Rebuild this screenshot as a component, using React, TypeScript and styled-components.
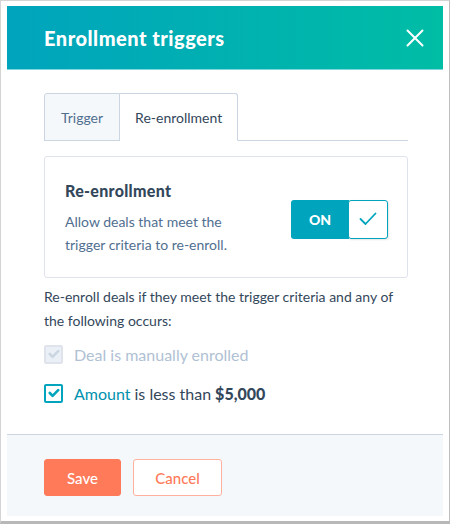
import React from "react";
import styled, { createGlobalStyle } from "styled-components";

const Global = createGlobalStyle`
  html, body { margin: 0; padding: 0; background: #fff; }
  body { font-family: Lato, "Open Sans", sans-serif; color: #33475b; }
  * { box-sizing: border-box; }
`;

const Frame = styled.div`
  width: 450px;
  height: 524px;
  border: 1px solid #d4d4d4;
  border-right-color: #bdbdbd;
  border-bottom: 3px solid #b8b8b8;
  padding: 5px 5px 4px 6px;
  background: #fff;
`;

const Dialog = styled.div`
  width: 436px;
  height: 510px;
  display: flex;
  flex-direction: column;
  background: #fff;
`;

const Header = styled.div`
  height: 64px;
  flex: none;
  display: flex;
  align-items: center;
  justify-content: space-between;
  padding: 0 19px 0 37px;
  background: linear-gradient(90deg, #00a4bd 0%, #00bda5 100%);
  border-bottom: 1px solid #7fd6dd;
`;

const Title = styled.h1`
  margin: 0;
  font-family: Lato, sans-serif;
  font-weight: 900;
  font-size: 20px;
  color: #fff;
  letter-spacing: 0.5px;
`;

const Close = styled.button`
  border: 0;
  background: none;
  padding: 0;
  width: 18px;
  height: 18px;
  display: flex;
  cursor: pointer;
`;

const Body = styled.div`
  flex: 1;
  padding: 23px 35px 0 37px;
`;

const Tabs = styled.div`
  display: flex;
  border-bottom: 1px solid #cbd6e2;
  height: 48px;
`;

const Tab = styled.div<{ $active?: boolean }>`
  height: 48px;
  display: flex;
  align-items: center;
  padding: 0 ${(p) => (p.$active ? "15px" : "16px")};
  font-size: 14px;
  color: ${(p) => (p.$active ? "#33475b" : "#516f90")};
  background: ${(p) => (p.$active ? "#fff" : "#f5f8fa")};
  border: 1px solid #cbd6e2;
  border-bottom: ${(p) => (p.$active ? "1px solid #fff" : "1px solid #cbd6e2")};
  border-left: ${(p) => (p.$active ? "0" : "1px solid #cbd6e2")};
  border-radius: ${(p) => (p.$active ? "0 3px 0 0" : "3px 0 0 0")};
`;

const Card = styled.div`
  margin-top: 15px;
  height: 122px;
  border: 1px solid #dfe3eb;
  border-radius: 3px;
  display: flex;
  align-items: center;
  justify-content: space-between;
  padding: 0 19px 0 20px;
`;

const CardText = styled.div`
  display: flex;
  flex-direction: column;
`;

const CardTitle = styled.div`
  font-weight: 900;
  font-size: 16px;
  letter-spacing: 0.3px;
  color: #33475b;
  margin-bottom: 10px;
  margin-top: 2px;
`;

const CardDesc = styled.div`
  font-size: 14px;
  line-height: 23px;
  color: #516f90;
  width: 175px;
`;

const Toggle = styled.div`
  display: flex;
  height: 39px;
  margin-top: 4px;
`;

const ToggleOn = styled.div`
  width: 58px;
  background: #00a4bd;
  color: #fff;
  font-weight: 900;
  font-size: 14px;
  display: flex;
  align-items: center;
  justify-content: center;
  border-radius: 3px 0 0 3px;
`;

const ToggleKnob = styled.div`
  width: 40px;
  background: #fff;
  border: 1px solid #00a4bd;
  border-radius: 3px;
  margin-left: -1px;
  display: flex;
  align-items: center;
  justify-content: center;
  box-shadow: 1px 1px 2px rgba(0, 0, 0, 0.1);
`;

const Intro = styled.p`
  margin: 7px 0 0;
  font-size: 14px;
  line-height: 24px;
  color: #33475b;
`;

const Options = styled.div`
  margin-top: 11px;
  display: flex;
  flex-direction: column;
  gap: 19px;
`;

const Option = styled.label<{ $disabled?: boolean }>`
  display: flex;
  align-items: center;
  gap: 11px;
  height: 20px;
  font-size: 16px;
  color: ${(p) => (p.$disabled ? "#b0c1d4" : "#33475b")};
`;

const Box = styled.span<{ $disabled?: boolean }>`
  width: 19px;
  height: 19px;
  flex: none;
  border-radius: 2px;
  border: 2px solid ${(p) => (p.$disabled ? "#dfe3eb" : "#00a4bd")};
  background: ${(p) => (p.$disabled ? "#eaf0f6" : "#fff")};
  display: flex;
  align-items: center;
  justify-content: center;
`;

const Link = styled.span`
  color: #0091ae;
  margin-right: 4px;
`;

const Strong = styled.strong`
  font-weight: 900;
  margin-left: 4px;
`;

const Footer = styled.div`
  height: 82px;
  flex: none;
  background: #f5f8fa;
  border-top: 1px solid #cbd6e2;
  display: flex;
  align-items: center;
  gap: 12px;
  padding: 4px 0 0 37px;
`;

const Button = styled.button<{ $primary?: boolean }>`
  height: 37px;
  padding: 0;
  width: ${(p) => (p.$primary ? "77px" : "89px")};
  border-radius: 3px;
  font-family: Lato, sans-serif;
  font-size: 15px;
  font-weight: 500;
  border: 1px solid ${(p) => (p.$primary ? "#ff7a59" : "#ffb19e")};
  background: ${(p) => (p.$primary ? "#ff7a59" : "#fff")};
  color: ${(p) => (p.$primary ? "#fff" : "#ff7a59")};
  cursor: pointer;
`;

const Check = ({ color }: { color: string }) => (
  <svg width={12} height={12} viewBox="0 0 12 12" fill="none">
    <path d="M1.8 6 L4.6 8.8 L10.2 3.2" stroke={color} strokeWidth={2.6} strokeLinecap="round" strokeLinejoin="round" />
  </svg>
);

export default function App() {
  return (
    <>
      <Global />
      <Frame>
        <Dialog>
          <Header>
            <Title>Enrollment triggers</Title>
            <Close aria-label="Close">
              <svg width="18" height="18" viewBox="0 0 18 18">
                <path d="M1.5 1.5 L16.5 16.5 M16.5 1.5 L1.5 16.5" stroke="#fff" strokeWidth="2" strokeLinecap="round" />
              </svg>
            </Close>
          </Header>
          <Body>
            <Tabs>
              <Tab>Trigger</Tab>
              <Tab $active>Re-enrollment</Tab>
            </Tabs>
            <Card>
              <CardText>
                <CardTitle>Re-enrollment</CardTitle>
                <CardDesc>Allow deals that meet the trigger criteria to re-enroll.</CardDesc>
              </CardText>
              <Toggle>
                <ToggleOn>ON</ToggleOn>
                <ToggleKnob>
                  <svg width="18" height="14" viewBox="0 0 18 14" fill="none">
                    <path d="M1.5 7 L6.5 12 L16.5 1.5" stroke="#00a4bd" strokeWidth="1.8" strokeLinecap="round" strokeLinejoin="round" />
                  </svg>
                </ToggleKnob>
              </Toggle>
            </Card>
            <Intro>Re-enroll deals if they meet the trigger criteria and any of the following occurs:</Intro>
            <Options>
              <Option $disabled>
                <Box $disabled>
                  <Check color="#cbd6e2" />
                </Box>
                Deal is manually enrolled
              </Option>
              <Option>
                <Box>
                  <Check color="#00a4bd" />
                </Box>
                <span>
                  <Link>Amount</Link>is less than<Strong>$5,000</Strong>
                </span>
              </Option>
            </Options>
          </Body>
          <Footer>
            <Button $primary>Save</Button>
            <Button>Cancel</Button>
          </Footer>
        </Dialog>
      </Frame>
    </>
  );
}
